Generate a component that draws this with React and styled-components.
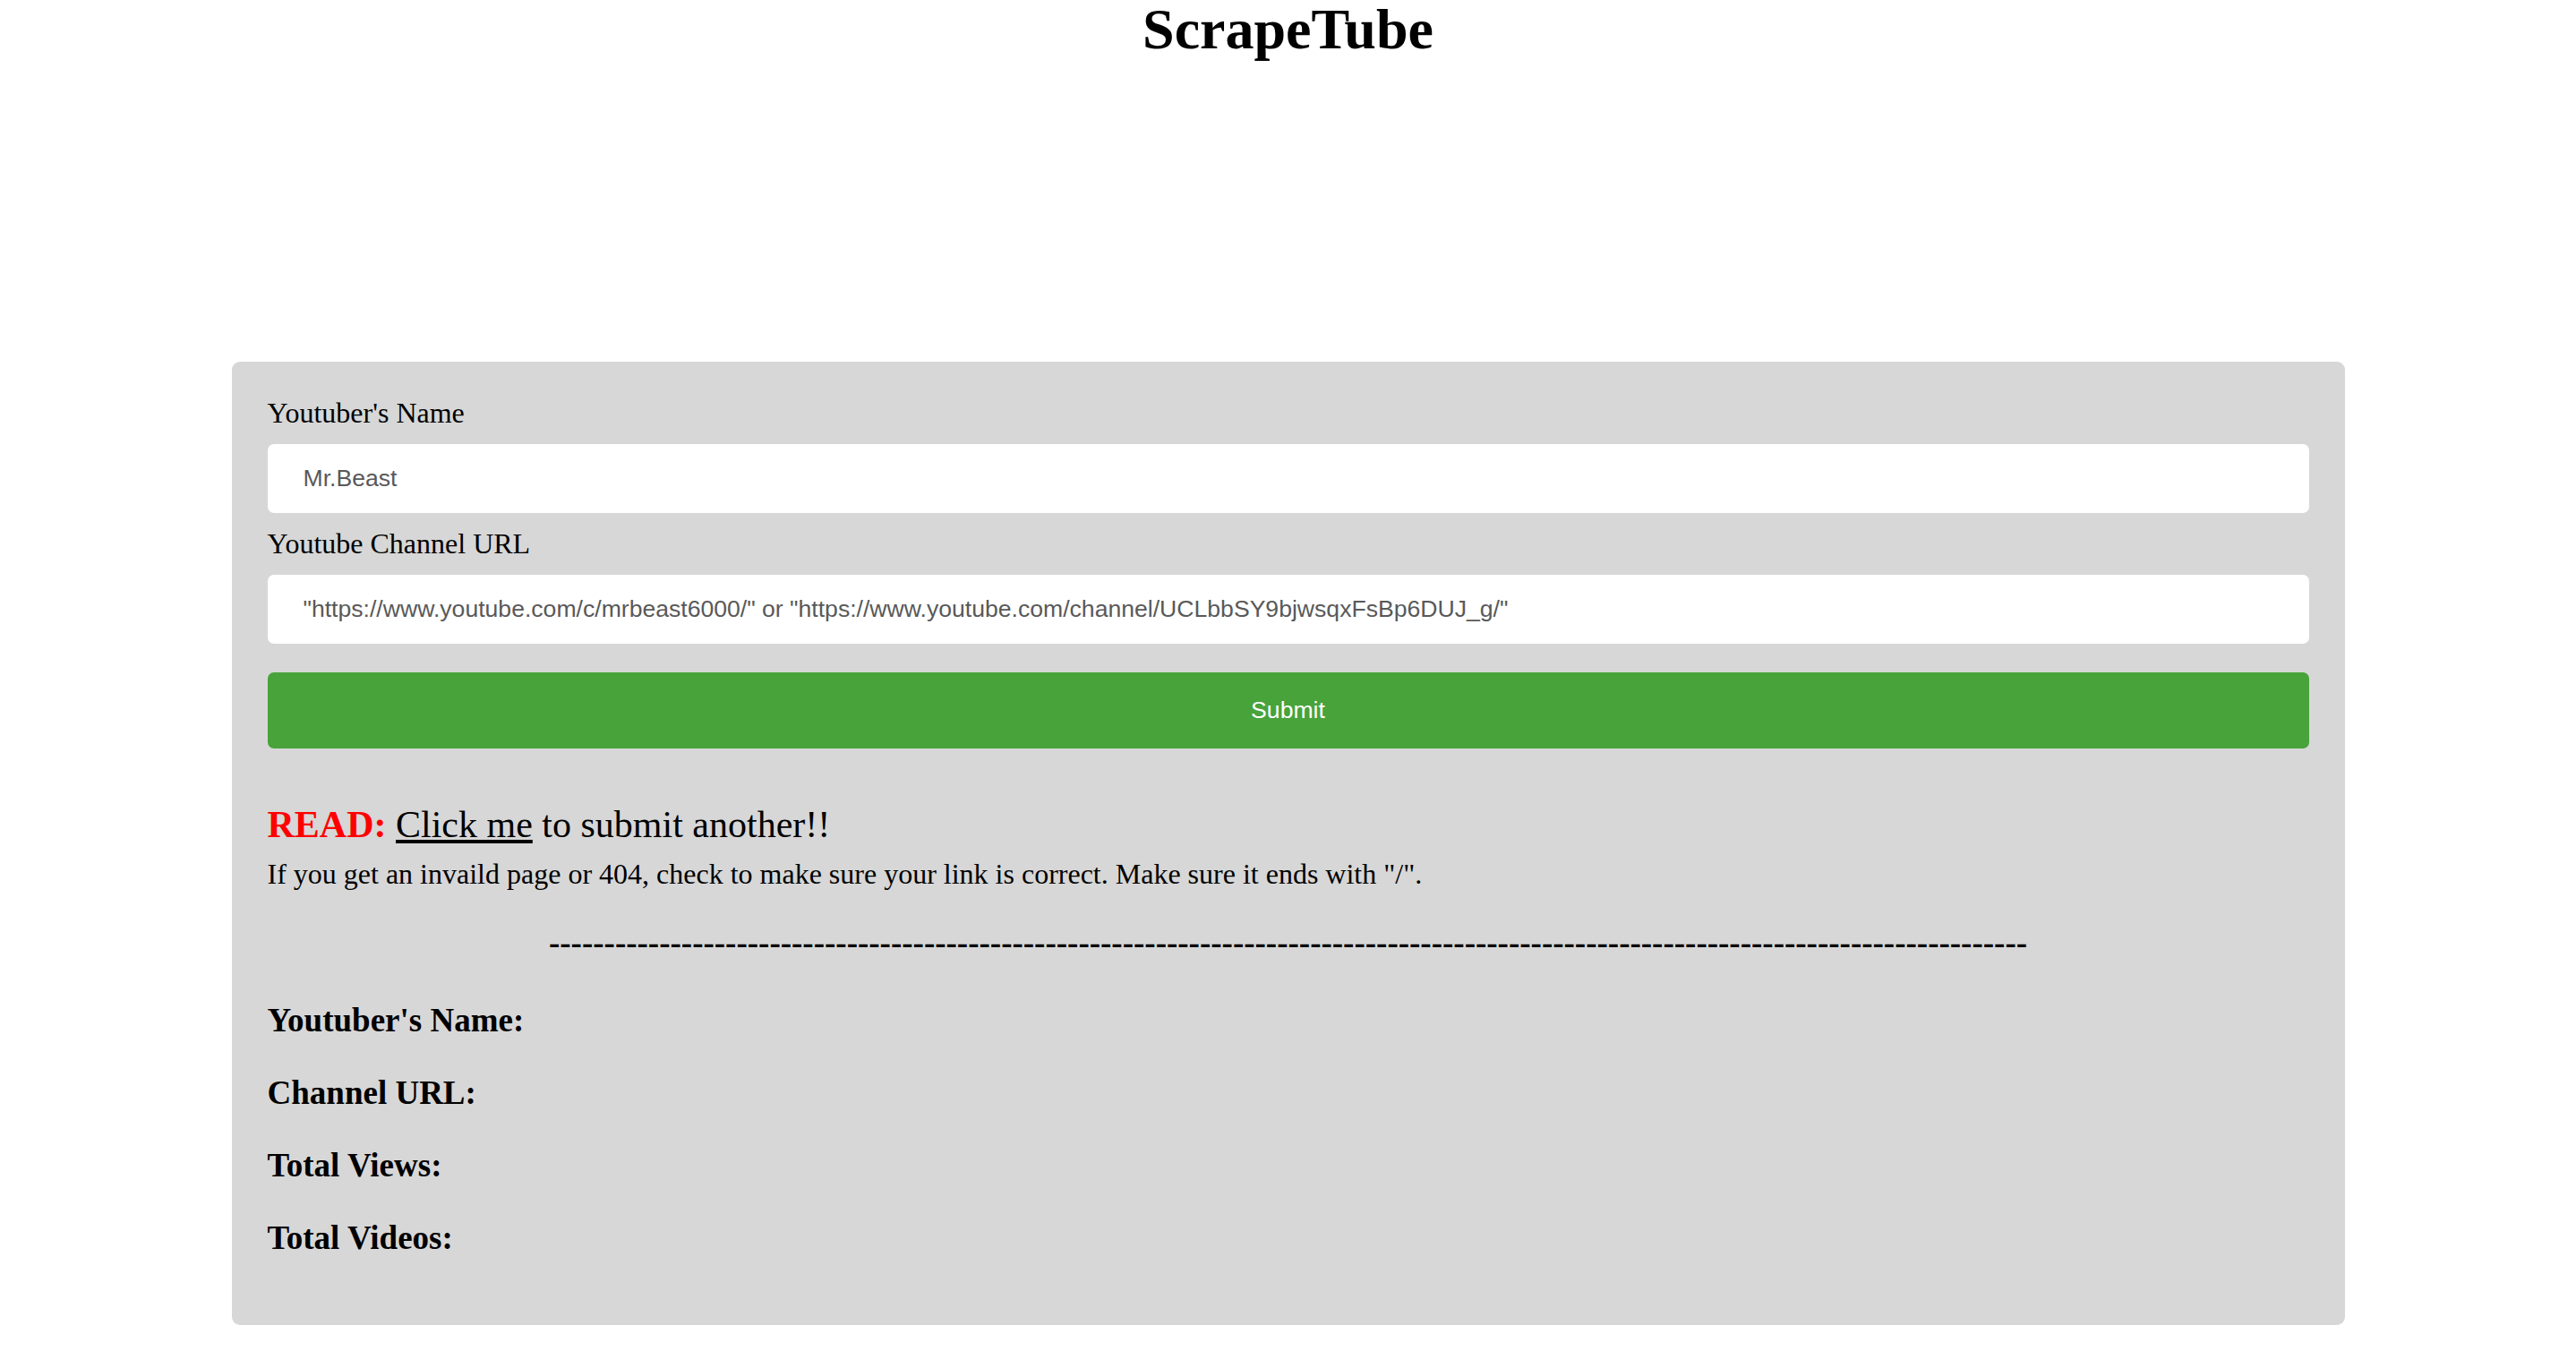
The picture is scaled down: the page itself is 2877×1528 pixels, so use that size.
import React from 'react'
import styled, { createGlobalStyle } from 'styled-components'

const GlobalStyle = createGlobalStyle`
    html, body {
        margin: 0;
        padding: 0;
        background: #ffffff;
    }
    body {
        font-family: "Liberation Serif", "Times New Roman", serif;
        color: #000;
    }
`

const Page = styled.div`
    width: 100%;
    padding-bottom: 45px;
`
const Title = styled.h1`
    margin: 0;
    font-size: 64px;
    line-height: 66px;
    font-weight: 700;
    text-align: center;
`
const Card = styled.div`
    width: 2360px;
    margin: 338px auto 0;
    box-sizing: border-box;
    padding: 39px 40px 38px;
    background: #d7d7d7;
    border-radius: 9px;
`
const Form = styled.form`
    display: flex;
    flex-direction: column;
`
const Label = styled.label`
    font-size: 32px;
    line-height: 37px;
`
const Input = styled.input`
    box-sizing: border-box;
    width: 100%;
    height: 77px;
    margin: 16px 0;
    padding: 0 40px;
    border: none;
    border-radius: 7px;
    background: #fff;
    font-family: "Liberation Sans", Arial, sans-serif;
    font-size: 26.6px;
    color: #222;
    outline: none;

    &::placeholder {
        color: #595959;
        opacity: 1;
    }
`
const Submit = styled.button`
    width: 100%;
    height: 85px;
    margin-top: 16px;
    border: none;
    border-radius: 7px;
    background: #47a33a;
    color: #fff;
    font-family: "Liberation Sans", Arial, sans-serif;
    font-size: 26.6px;
    cursor: pointer;
`
const Notice = styled.div`
    margin-top: 61px;
    font-size: 42px;
    line-height: 48px;
`
const ReadTag = styled.strong`
    color: #ff0000;
    font-weight: 700;
`
const Link = styled.a`
    color: #000;
    text-decoration: underline;
    cursor: pointer;
`
const Hint = styled.p`
    margin: 13px 0 0;
    font-size: 32px;
    line-height: 37px;
`
const Divider = styled.h3`
    margin: 36px 0 0;
    font-size: 37px;
    line-height: 44px;
    font-weight: 700;
    text-align: center;
    white-space: nowrap;
    overflow: hidden;
`
const Results = styled.div`
    padding-top: 6px;
`
const ResultHeading = styled.h3`
    margin: 37px 0;
    font-size: 37px;
    line-height: 44px;
    font-weight: 700;
`

const fields = ["Youtuber's Name:", 'Channel URL:', 'Total Views:', 'Total Videos:']

const App = () => {
    return (
        <Page>
            <GlobalStyle />
            <Title>ScrapeTube</Title>
            <Card>
                <Form onSubmit={e => e.preventDefault()}>
                    <Label htmlFor="yt-name">Youtuber's Name</Label>
                    <Input id="yt-name" type="text" placeholder="Mr.Beast" />
                    <Label htmlFor="yt-url">Youtube Channel URL</Label>
                    <Input
                        id="yt-url"
                        type="text"
                        placeholder={'"https://www.youtube.com/c/mrbeast6000/" or "https://www.youtube.com/channel/UCLbbSY9bjwsqxFsBp6DUJ_g/"'}
                    />
                    <Submit type="submit">Submit</Submit>
                </Form>
                <Notice>
                    <ReadTag>READ:</ReadTag> <Link>Click me</Link> to submit another!!
                </Notice>
                <Hint>If you get an invaild page or 404, check to make sure your link is correct. Make sure it ends with "/".</Hint>
                <Divider>{'-'.repeat(134)}</Divider>
                <Results>
                    {fields.map(f => (
                        <ResultHeading key={f}>{f}</ResultHeading>
                    ))}
                </Results>
            </Card>
        </Page>
    )
}

export default App
